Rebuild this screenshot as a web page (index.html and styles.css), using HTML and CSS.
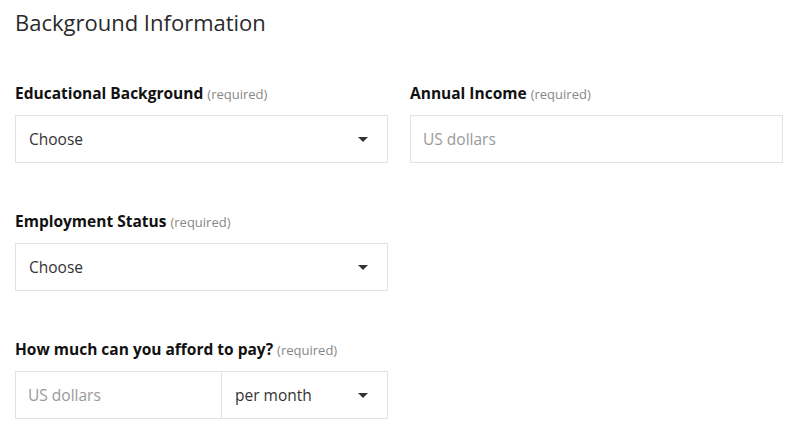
FILE: index.html
```html
<!DOCTYPE html>
<html lang="en">
<head>
    <meta charset="UTF-8">
    <meta name="viewport" content="width=device-width, initial-scale=1.0">
    <title>Background Information</title>
    <link rel="stylesheet" href="styles.css">
</head>
<body>
    <form class="form">
        <h2>Background Information</h2>

        <div class="row">
            <div class="field">
                <label for="education">Educational Background <span class="req">(required)</span></label>
                <div class="select-wrap">
                    <select id="education" name="education" required>
                        <option>Choose</option>
                        <option>High school</option>
                        <option>Bachelor's degree</option>
                        <option>Master's degree</option>
                    </select>
                </div>
            </div>
            <div class="field">
                <label for="income">Annual Income <span class="req">(required)</span></label>
                <input type="number" id="income" name="income" placeholder="US dollars" required>
            </div>
        </div>

        <div class="row">
            <div class="field">
                <label for="employment">Employment Status <span class="req">(required)</span></label>
                <div class="select-wrap">
                    <select id="employment" name="employment" required>
                        <option>Choose</option>
                        <option>Employed</option>
                        <option>Self-employed</option>
                        <option>Unemployed</option>
                    </select>
                </div>
            </div>
        </div>

        <div class="row">
            <div class="field">
                <label for="afford">How much can you afford to pay? <span class="req">(required)</span></label>
                <div class="group">
                    <input type="number" id="afford" name="afford" placeholder="US dollars" required>
                    <div class="select-wrap">
                        <select id="period" name="period">
                            <option>per month</option>
                            <option>per year</option>
                        </select>
                    </div>
                </div>
            </div>
        </div>
    </form>
</body>
</html>
```

FILE: styles.css
```css
body {
    font-family: "Open Sans", Arial, sans-serif;
    color: #222;
    background-color: #fff;
    margin: 0;
    padding: 5px 17px 0 15px;
}
.form h2 {
    font-size: 22px;
    font-weight: 400;
    line-height: 30px;
    margin: 2px 0 44px 0;
    color: #2a2a2a;
}
.row {
    display: grid;
    grid-template-columns: 1fr 1fr;
    column-gap: 22px;
    margin-bottom: 46px;
}
.row:last-child {
    margin-bottom: 0;
}
.field label {
    display: block;
    height: 24px;
    font-size: 15.5px;
    font-weight: 700;
    line-height: 24px;
    margin-bottom: 10px;
    color: #111;
    white-space: nowrap;
}
.req {
    font-size: 13px;
    font-weight: 400;
    line-height: 1;
    color: #888;
}
input, select {
    font-family: inherit;
    font-size: 15.5px;
    width: 100%;
    height: 48px;
    box-sizing: border-box;
    border: 1px solid #e2e2e2;
    border-radius: 0;
    background-color: #fff;
    padding: 0 12px;
    margin: 0;
    color: #333;
    outline: none;
}
input::placeholder {
    color: #999;
}
input[type="number"] {
    -moz-appearance: textfield;
}
input::-webkit-outer-spin-button, input::-webkit-inner-spin-button {
    -webkit-appearance: none;
    margin: 0;
}
select {
    -webkit-appearance: none;
    appearance: none;
    padding-left: 13px;
    cursor: pointer;
}
.select-wrap {
    position: relative;
}
.select-wrap::after {
    content: "";
    position: absolute;
    top: 22px;
    right: 20px;
    border-left: 5px solid transparent;
    border-right: 5px solid transparent;
    border-top: 5px solid #333;
    pointer-events: none;
}
.group {
    display: grid;
    grid-template-columns: 206px 1fr;
}
.group input {
    border-right: none;
}
```
